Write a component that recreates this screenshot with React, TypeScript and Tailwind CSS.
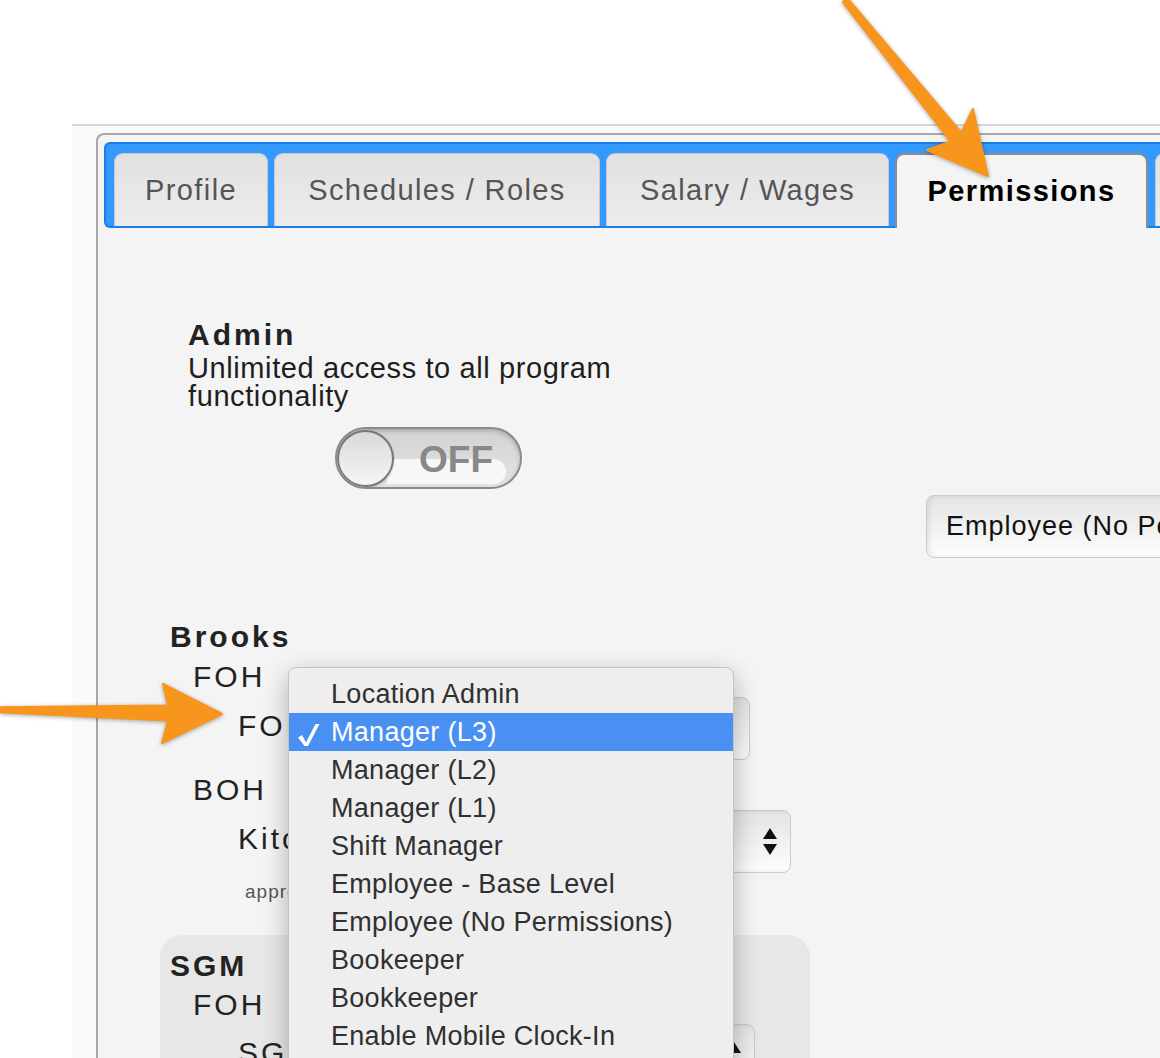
import React from 'react';

const tabs = [
  { label: 'Profile', w: 'w-[154px]' },
  { label: 'Schedules / Roles', w: 'w-[326px]' },
  { label: 'Salary / Wages', w: 'w-[283px]' },
];

const menuItems = [
  'Location Admin',
  'Manager (L3)',
  'Manager (L2)',
  'Manager (L1)',
  'Shift Manager',
  'Employee - Base Level',
  'Employee (No Permissions)',
  'Bookeeper',
  'Bookkeeper',
  'Enable Mobile Clock-In',
  'Time Off Approver',
];

const UpDown = () => (
  <svg width="14" height="28" viewBox="0 0 14 28" className="shrink-0">
    <path d="M0 11 L7 0 L14 11 Z" fill="#111" />
    <path d="M0 16 L14 16 L7 27 Z" fill="#111" />
  </svg>
);

const Select = ({ className, label, arrows }: { className: string; label?: string; arrows?: boolean }) => (
  <div
    className={`flex shrink-0 items-center justify-between rounded-[8px] border border-[#cbcbcb] bg-linear-to-b from-[#e4e4e4] to-[#fdfdfd] pl-[19px] pr-[13px] shadow-[inset_3px_0_4px_rgba(0,0,0,0.07)] ${className}`}
  >
    <span className="whitespace-nowrap text-[27px] tracking-[1px] text-[#111]">{label}</span>
    {arrows && <UpDown />}
  </div>
);

const TabBar = () => (
  <div className="flex h-[86px] items-end gap-[6px] rounded-l-[6px] border-2 border-r-0 border-[#1c7de2] bg-[#3399ff] pl-[8px]">
    {tabs.map(t => (
      <div
        key={t.label}
        className={`flex h-[73px] shrink-0 items-center justify-center rounded-t-[9px] border border-b-0 border-[#c8c8c8] bg-linear-to-b from-[#e1e1e1] to-[#ececec] text-[29px] leading-[34px] tracking-[1.4px] text-[#555] ${t.w}`}
      >
        {t.label}
      </div>
    ))}
    <div className="-mb-[2px] flex h-[75px] w-[253px] shrink-0 items-center justify-center rounded-t-[9px] border-2 border-b-0 border-[#8c8c8c] bg-[#f4f4f4] pb-[2px] text-[29px] font-bold leading-[34px] tracking-[1.4px] text-black">
      Permissions
    </div>
    <div className="ml-[1px] h-[73px] w-[120px] shrink-0 rounded-t-[9px] border border-b-0 border-[#c8c8c8] bg-linear-to-b from-[#e1e1e1] to-[#ececec]" />
  </div>
);

const Toggle = () => (
  <div className="relative ml-[147px] mt-[17px] flex h-[62px] w-[187px] items-center overflow-hidden rounded-full border-2 border-[#8a8a8a] bg-linear-to-b from-[#d2d2d2] to-[#e4e4e4] shadow-[inset_0_2px_4px_rgba(0,0,0,0.2)]">
    <div className="absolute bottom-[3px] left-[50px] right-[14px] h-[25px] rounded-r-full rounded-l-[6px] bg-[#f7f7f7]" />
    <div className="relative h-[57px] w-[57px] shrink-0 rounded-full border-2 border-[#777] bg-linear-to-b from-[#d9d9d9] to-[#f6f6f6] shadow-[0_1px_2px_rgba(0,0,0,0.25)]" />
    <span className="relative ml-[25px] mt-[3px] text-[37px] font-bold leading-[40px] text-[#888]">OFF</span>
  </div>
);

const Row = ({ label, selectW, arrows }: { label: string; selectW: string; arrows?: boolean }) => (
  <div className="flex items-center pl-[68px]">
    <span className="mb-[6px] w-[72px] shrink-0 whitespace-nowrap text-[30px] leading-[34px] tracking-[3px]">{label}</span>
    <Select className={`ml-[10px] h-[63px] ${selectW}`} label="" arrows={arrows} />
  </div>
);

const Content = () => (
  <div>
    <div className="pl-[84px] pt-[90px]">
      <div className="text-[30px] font-bold leading-[34px] tracking-[3px] text-[#222]">Admin</div>
      <div className="mt-[2px] w-[440px] text-[29px] leading-[28px] tracking-[0.6px] text-[#1e1e1e]">
        Unlimited access to all program functionality
      </div>
      <Toggle />
    </div>

    <div className="mt-[6px] pl-[822px]">
      <Select className="h-[63px] w-[400px]" label="Employee (No Permissions)" />
    </div>

    <div className="mt-[62px] pl-[66px]">
      <div className="text-[30px] font-bold leading-[34px] tracking-[3px] text-[#222]">Brooks</div>
      <div className="mt-[6px] pl-[23px] text-[30px] leading-[34px] tracking-[3px]">FOH</div>
      <div className="mt-[3px]">
        <Row label="FOH Manager" selectW="w-[430px]" />
      </div>
      <div className="mt-[13px] pl-[23px] text-[30px] leading-[34px] tracking-[3px]">BOH</div>
      <div className="mt-[3px]">
        <Row label="Kitchen" selectW="w-[471px]" arrows />
      </div>
      <div className="mt-[8px] pl-[75px] text-[19px] leading-[22px] tracking-[1px] text-[#555]">approves time off requests</div>
    </div>

    <div className="ml-[56px] mt-[32px] h-[160px] w-[650px] rounded-[22px] bg-[#e7e7e7] pl-[10px] pt-[14px]">
      <div className="text-[30px] font-bold leading-[34px] tracking-[3px] text-[#222]">SGM</div>
      <div className="mt-[5px] pl-[23px] text-[30px] leading-[34px] tracking-[3px]">FOH</div>
      <div className="mt-[2px]">
        <Row label="SGM Server" selectW="w-[435px]" arrows />
      </div>
    </div>
  </div>
);

const Menu = () => (
  <div className="absolute left-[288px] top-[667px] h-[420px] w-[446px] rounded-t-[8px] border border-[#c4c4c4] bg-[#eeeeee] pt-[7px] shadow-[0_8px_26px_rgba(0,0,0,0.28)]">
    {menuItems.map((item, i) => {
      const active = i === 1;
      return (
        <div
          key={item + i}
          className={`flex h-[38px] items-center ${active ? 'bg-[#4a8ff2] text-white' : 'text-[#303030]'}`}
        >
          <div className="flex h-[38px] w-[42px] shrink-0 items-center">
            {active && (
              <svg width="32" height="38" viewBox="0 0 32 38">
                <path d="M9 24.5 L13 22 L17 29.5 L26.5 11 L30.5 11 L19 33 L15.5 33 Z" fill="#fff" />
              </svg>
            )}
          </div>
          <span className="whitespace-nowrap text-[27px] leading-[32px] tracking-[0.3px]">{item}</span>
        </div>
      );
    })}
  </div>
);

const Arrows = () => (
  <svg
    width="1160"
    height="1058"
    viewBox="0 0 1160 1058"
    className="pointer-events-none absolute left-0 top-0 drop-shadow-[0_1px_2px_rgba(0,0,0,0.35)]"
  >
    <path
      d="M847.3 -1.9 L961.4 132.6 L973 109 L988 176 L927 150 L950.6 141.4 L842.7 1.9 Z"
      fill="#f8951d"
      stroke="#f8951d"
      strokeWidth="2"
      strokeLinejoin="round"
    />
    <path
      d="M-6 707.2 L168 705.5 L163 684 L222 714 L162 743 L168 720.5 L-6 712 Z"
      fill="#f8951d"
      stroke="#f8951d"
      strokeWidth="2"
      strokeLinejoin="round"
    />
  </svg>
);

export default function App() {
  return (
    <div className="relative h-[1058px] w-[1160px] overflow-hidden bg-white font-['Liberation_Sans',Arial,sans-serif] text-[#222]">
      <div className="h-[124px]" />
      <div className="ml-[72px] h-[934px] border-t-2 border-[#d6d6d6] bg-[#fafafa] pl-[24px] pt-[7px]">
        <div className="h-full rounded-tl-[8px] border-l-2 border-t-2 border-[#a8a8a8] bg-[#f4f4f4] pl-[6px] pt-[7px]">
          <TabBar />
          <Content />
        </div>
      </div>
      <Menu />
      <Arrows />
    </div>
  );
}
